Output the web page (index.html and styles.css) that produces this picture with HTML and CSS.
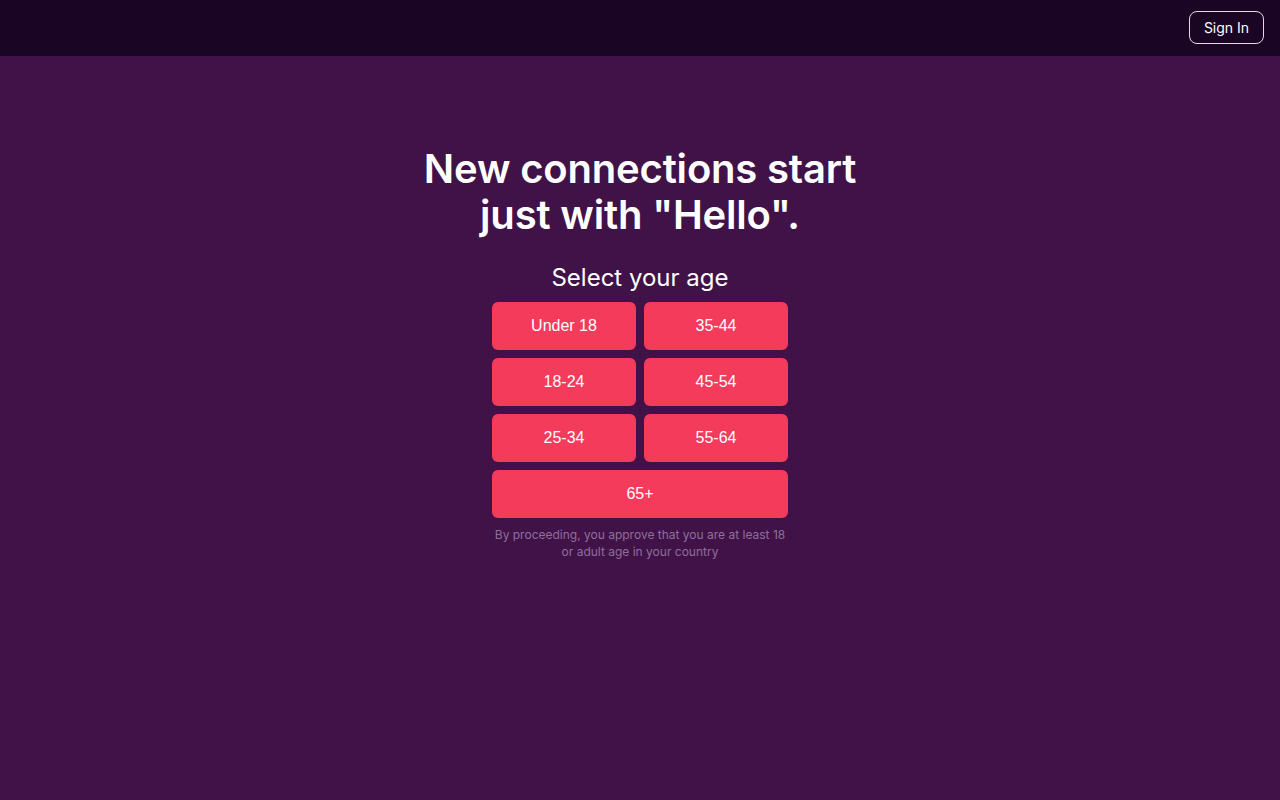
FILE: index.html
```html
<!DOCTYPE html>
<html lang="en">
<head>
<meta charset="utf-8">
<title>Hello</title>
<link rel="stylesheet" href="styles.css">
</head>
<body>
<header class="topbar">
  <button class="signin">Sign In</button>
</header>
<main class="main">
  <h1 class="title">New connections start<br>just with "Hello".</h1>
  <h2 class="subtitle">Select your age</h2>
  <div class="ages">
    <button class="age">Under 18</button>
    <button class="age">35-44</button>
    <button class="age">18-24</button>
    <button class="age">45-54</button>
    <button class="age">25-34</button>
    <button class="age">55-64</button>
    <button class="age wide">65+</button>
  </div>
  <p class="note">By proceeding, you approve that you are at least 18<br>or adult age in your country</p>
</main>
</body>
</html>
```
FILE: styles.css
```css
* { box-sizing: border-box; }
html, body { margin: 0; padding: 0; }
body {
  background: #411248;
  font-family: Inter, "Noto Sans", sans-serif;
  color: #fff;
  min-height: 800px;
}
.topbar {
  height: 56px;
  background: #1b0524;
  display: flex;
  justify-content: flex-end;
  align-items: flex-start;
  padding: 11px 16px 0 0;
}
.signin {
  width: 75px;
  height: 33px;
  background: transparent;
  border: 1px solid #e6d8ea;
  border-radius: 8px;
  color: #fff;
  font-family: Inter, sans-serif;
  font-size: 14px;
  line-height: 31px;
  padding: 0 0 1px;
}
.main {
  display: flex;
  flex-direction: column;
  align-items: center;
  padding-top: 90px;
}
.title {
  margin: 0;
  font-size: 40px;
  line-height: 46px;
  font-weight: 600;
  text-align: center;
  letter-spacing: -0.18px;
}
.subtitle {
  margin: 24px 0 0;
  font-size: 24px;
  line-height: 32px;
  font-weight: 400;
}
.ages {
  margin-top: 8px;
  display: grid;
  grid-template-columns: 144px 144px;
  gap: 8px;
}
.age {
  height: 48px;
  border: 0;
  border-radius: 6px;
  background: #f43b5c;
  color: #fff;
  font-family: "Liberation Sans", Arial, sans-serif;
  font-size: 16px;
  padding: 0;
}
.wide { grid-column: 1 / 3; }
.note {
  margin: 8px 0 0;
  font-size: 12px;
  line-height: 17px;
  color: #8f6f9a;
  text-align: center;
}
```
